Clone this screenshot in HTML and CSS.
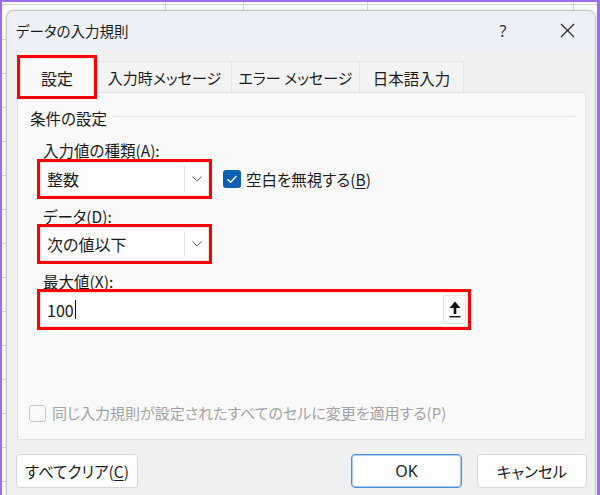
FILE: index.html
```html
<!DOCTYPE html>
<html lang="ja">
<head>
<meta charset="utf-8">
<title>データの入力規則</title>
<link rel="stylesheet" href="styles.css">
</head>
<body>
<div class="screen">
  <div class="dialog">
    <div class="titlebar">
      <span class="title">データの入力規則</span>
      <span class="tb-btn help">?</span>
      <span class="tb-btn close"><svg width="15" height="15" viewBox="0 0 15 15"><path d="M1 1 L14 14 M14 1 L1 14" stroke="#2b2b2b" stroke-width="1.3" fill="none"/></svg></span>
    </div>
    <div class="tabs">
      <div class="tab active mark">設定</div>
      <div class="tab t2">入力時メッセージ</div>
      <div class="tab t3">エラー メッセージ</div>
      <div class="tab t4">日本語入力</div>
    </div>
    <div class="panel">
      <div class="group-head"><span>条件の設定</span><span class="rule"></span></div>
      <div class="fields">
        <div class="label first">入力値の種類(<u>A</u>):</div>
        <div class="row">
          <div class="combo mark"><span class="val">整数</span><span class="drop"><svg width="10" height="6" viewBox="0 0 10 6"><polyline points="0.5,0.5 5,5 9.5,0.5" fill="none" stroke="#6b6b6b" stroke-width="1"/></svg></span></div>
          <div class="check"><span class="box checked"><svg width="18" height="18" viewBox="0 0 18 18"><polyline points="4.5,9.2 7.6,12.2 13.5,6" fill="none" stroke="#fff" stroke-width="1.4"/></svg></span><span>空白を無視する(<u>B</u>)</span></div>
        </div>
        <div class="label">データ(<u>D</u>):</div>
        <div class="combo mark"><span class="val">次の値以下</span><span class="drop"><svg width="10" height="6" viewBox="0 0 10 6"><polyline points="0.5,0.5 5,5 9.5,0.5" fill="none" stroke="#6b6b6b" stroke-width="1"/></svg></span></div>
        <div class="label">最大値(<u>X</u>):</div>
        <div class="input mark"><span class="val">100</span><span class="caret"></span><span class="fill"></span><span class="ref-btn"><svg width="12" height="17" viewBox="0 0 12 17"><polygon points="6,0.5 11.5,7 7.3,7 7.3,13 4.7,13 4.7,7 0.5,7" fill="#111"/><rect x="0.5" y="15" width="11" height="1.4" fill="#111"/></svg></span></div>
      </div>
      <div class="apply"><span class="box"></span><span>同じ入力規則が設定されたすべてのセルに変更を適用する(P)</span></div>
    </div>
    <div class="buttons">
      <button class="btn clear">すべてクリア(<u>C</u>)</button>
      <span class="spacer"></span>
      <button class="btn ok">OK</button>
      <button class="btn cancel">キャンセル</button>
    </div>
  </div>
</div>
</body>
</html>
```
FILE: styles.css
```css
* { box-sizing: border-box; }
html, body { margin: 0; padding: 0; }
body {
  width: 600px;
  height: 495px;
  overflow: hidden;
  font-family: "Noto Sans CJK JP", "Noto Sans", sans-serif;
  font-feature-settings: "palt";
  color: #1b1b1b;
}
.screen {
  width: 600px;
  height: 495px;
  overflow: hidden;
  border-top: 2px solid #9a6cf0;
  border-left: 2px solid #9a6cf0;
  border-right: 3px solid #9a6cf0;
  background-color: #fbfbfb;
  background-image:
    linear-gradient(#d3d3d3, #d3d3d3),
    linear-gradient(#d3d3d3, #d3d3d3),
    linear-gradient(#d3d3d3, #d3d3d3),
    linear-gradient(#d3d3d3, #d3d3d3),
    linear-gradient(#d3d3d3, #d3d3d3),
    repeating-linear-gradient(180deg, transparent 0 33px, #d6d6d6 33px 34px);
  background-size: 1px 10px, 1px 10px, 1px 10px, 1px 10px, 600px 1px, 5px 495px;
  background-position: 163px 0, 241px 0, 365px 0, 571px 0, 0 2px, 0 4px;
  background-repeat: no-repeat;
  padding: 8px 0 0 4px;
}
.dialog {
  width: 590px;
  height: 500px;
  border: 1px solid #c6c6c6;
  border-bottom: none;
  border-radius: 8px 8px 0 0;
  background: #f0f0f0;
  overflow: hidden;
  box-shadow: 0 0 3px rgba(0,0,0,0.12);
}
.titlebar {
  height: 39px;
  background: #edf1f7;
  display: flex;
  align-items: center;
  padding-left: 9px;
}
.title {
  flex: 1;
  font-size: 14.5px;
  line-height: 20px;
  color: #1a1a1a;
}
.tb-btn {
  display: flex;
  align-items: center;
  justify-content: center;
  height: 39px;
}
.help {
  width: 40px;
  font-size: 16px;
  color: #333;
  font-family: "Noto Sans", sans-serif;
  margin-right: 24px;
}
.close {
  width: 40px;
  margin-right: 8px;
}
.tabs {
  height: 42px;
  display: flex;
  align-items: flex-end;
  padding-left: 13px;
}
.tab {
  height: 31px;
  display: flex;
  align-items: center;
  justify-content: center;
  font-size: 15px;
  line-height: 20px;
  background: #f3f3f3;
  border: 1px solid #e3e3e3;
  border-bottom: none;
  padding-top: 1px;
}
.tab.active {
  width: 74px;
  height: 38px;
  margin-bottom: -4px;
  margin-right: 3px;
  position: relative;
  z-index: 1;
  background: #f9f9f9;
  padding-top: 0;
  font-size: 16px;
}
.t2 { width: 134px; border-right: none; }
.t3 { width: 128px; border-right: none; }
.t4 { width: 105px; font-size: 15.5px; }
.mark { outline: 3px solid #ff0000; }
.panel {
  margin-left: 10px;
  width: 569px;
  height: 348px;
  border: 1px solid #e3e3e3;
  background: #f9f9f9;
  display: flex;
  flex-direction: column;
  padding: 15px 10px 16px 12px;
}
.group-head {
  display: flex;
  align-items: center;
  height: 20px;
  font-size: 15.5px;
  line-height: 20px;
}
.rule {
  flex: 1;
  height: 1px;
  background: #e2e2e2;
  margin-left: 6px;
  margin-top: -3px;
}
.fields {
  margin-left: 10px;
  display: flex;
  flex-direction: column;
  align-items: flex-start;
}
.label {
  height: 20px;
  line-height: 20px;
  font-size: 15.5px;
  padding-left: 3px;
  margin-top: 10px;
}
.label.first { margin-top: 12px; }
.label + .combo, .label + .input { margin-top: 1px; }
.row {
  display: flex;
  align-items: center;
  margin-top: 2px;
}
.label + .row { margin-top: 2px; }
.combo {
  width: 169px;
  height: 34px;
  background: #fdfdfd;
  border: 1px solid #e6e6e6;
  display: flex;
  align-items: stretch;
}
.val {
  flex: 1;
  display: flex;
  align-items: center;
  padding-left: 6px;
  font-size: 16px;
  line-height: 20px;
}
.drop {
  width: 24px;
  border-left: 1px solid #e4e4e4;
  margin: 3px 0;
  display: flex;
  align-items: center;
  justify-content: center;
}
.check {
  display: flex;
  align-items: center;
  margin-left: 14px;
  font-size: 15.5px;
  line-height: 20px;
}
.box {
  width: 18px;
  height: 18px;
  border-radius: 3px;
  display: block;
  margin-right: 5px;
}
.box.checked { background: #0c5fb3; }
.input {
  width: 428px;
  height: 35px;
  background: #fdfdfd;
  border: 1px solid #e6e6e6;
  display: flex;
  align-items: center;
  padding-right: 1px;
}
.input .val { flex: none; }
.caret {
  width: 1px;
  height: 19px;
  background: #111;
  margin-left: 1px;
}
.fill { flex: 1; }
.ref-btn {
  width: 23px;
  height: 29px;
  background: #fbfbfb;
  border: 1px solid #e0e0e0;
  border-radius: 3px;
  display: flex;
  align-items: center;
  justify-content: center;
}
.apply {
  margin-top: auto;
  display: flex;
  align-items: center;
  height: 20px;
  font-size: 15px;
  line-height: 20px;
  color: #a3a3a3;
}
.apply .box {
  width: 17px;
  height: 17px;
  border: 1px solid #c9c9c9;
  margin-right: 6px;
  margin-left: -1px;
}
.buttons {
  display: flex;
  margin-top: 14px;
  padding: 0 8px 0 9px;
}
.spacer { flex: 1; }
.btn {
  height: 34px;
  background: #fdfdfd;
  border: 1px solid #d8d8d8;
  border-radius: 4px;
  font-family: "Noto Sans CJK JP", "Noto Sans", sans-serif;
  font-feature-settings: "palt";
  font-size: 15.5px;
  line-height: 20px;
  color: #1b1b1b;
  padding: 0;
}
.clear { width: 122px; }
.ok {
  width: 111px;
  margin-right: 15px;
  border: 1px solid #4a8fd8;
  box-shadow: inset 0 0 0 1px #a8ccef;
  font-family: "Noto Sans", sans-serif;
  font-size: 16px;
}
.cancel { width: 110px; }
u { text-decoration-thickness: 1px; text-underline-offset: 2px; }
```
